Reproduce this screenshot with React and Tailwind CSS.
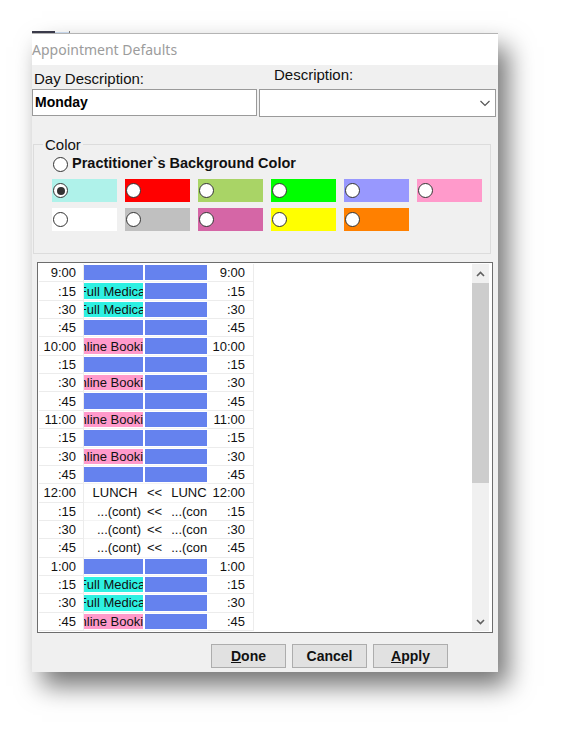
import React from 'react';

const swatches = [
  ['#aff2ea', true],
  ['#ff0000', false],
  ['#a9d466', false],
  ['#00ff00', false],
  ['#9898fe', false],
  ['#ff9acb', false],
  ['#ffffff', false],
  ['#c0c0c0', false],
  ['#d566a6', false],
  ['#ffff00', false],
  ['#ff8000', false],
];

// b = booked blue, t = full medical, p = online booking, l = lunch, c = lunch continued
const slots = [
  ['9:00', 'b', 'b'],
  [':15', 't', 'b'],
  [':30', 't', 'b'],
  [':45', 'b', 'b'],
  ['10:00', 'p', 'b'],
  [':15', 'b', 'b'],
  [':30', 'p', 'b'],
  [':45', 'b', 'b'],
  ['11:00', 'p', 'b'],
  [':15', 'b', 'b'],
  [':30', 'p', 'b'],
  [':45', 'b', 'b'],
  ['12:00', 'l', 'l'],
  [':15', 'c', 'c'],
  [':30', 'c', 'c'],
  [':45', 'c', 'c'],
  ['1:00', 'b', 'b'],
  [':15', 't', 'b'],
  [':30', 't', 'b'],
  [':45', 'p', 'b'],
];

function Radio({ checked }) {
  return (
    <span className="w-[15px] h-[15px] rounded-full border border-[#333] bg-white flex items-center justify-center shrink-0">
      {checked && <span className="w-[8px] h-[8px] rounded-full bg-[#333]" />}
    </span>
  );
}

function Cell({ kind, second }) {
  if (kind === 'b') return <div className="h-full bg-[#6582ee]" />;
  if (kind === 't' || kind === 'p') {
    return (
      <div
        className={`h-full flex items-center justify-center overflow-hidden whitespace-nowrap ${
          kind === 't' ? 'bg-[#2ef0e2]' : 'bg-[#ff9acb]'
        }`}
      >
        {kind === 't' ? 'Full Medical' : 'Online Booking'}
      </div>
    );
  }
  const text = kind === 'l' ? 'LUNCH' : '...(cont)';
  if (second) {
    return (
      <div className="h-full flex items-center overflow-hidden whitespace-nowrap bg-white">
        <span className="ml-[2px] mr-[9px]">&lt;&lt;</span>
        <span>{text}</span>
      </div>
    );
  }
  return (
    <div
      className={`h-full flex items-center overflow-hidden whitespace-nowrap bg-white ${
        kind === 'l' ? 'justify-center pl-[3px]' : 'justify-end pr-[2px]'
      }`}
    >
      {text}
    </div>
  );
}

export default function App() {
  return (
    <div className="w-[563px] h-[738px] bg-white pt-[31px] pl-[32px] font-['Liberation_Sans',Arial,sans-serif] text-black overflow-hidden">
      <div className="flex items-end h-[2px] w-[40px]">
        <div className="w-[23px] h-[2px] bg-[#3a3a4a]" />
        <div className="w-[14px] h-[1px] bg-[#c6d6ea]" />
        <div className="w-[1px] h-[2px] bg-[#777]" />
      </div>
      <div className="w-[466px] h-[639px] bg-[#f0f0f0] border-t border-[#b4b4b4] shadow-[10px_14px_24px_rgba(0,0,0,0.55)] flex flex-col">
        <div className="h-[31px] bg-white flex items-center font-['Noto_Sans',sans-serif] text-[14px] text-[#9c9c9c]">
          Appointment Defaults
        </div>

        <div className="flex h-[24px] text-[15px] text-[#111]">
          <div className="w-[242px] pl-[2px] pt-[3px]">Day Description:</div>
          <div className="-mt-px">Description:</div>
        </div>

        <div className="flex gap-[2px]">
          <div className="w-[225px] h-[27px] bg-white border border-[#9a9a9a] flex items-center pl-[2px] text-[14px] font-bold">
            Monday
          </div>
          <div className="w-[237px] h-[28px] bg-white border border-[#9a9a9a] flex items-center justify-end pr-[4px]">
            <svg width="12" height="8" viewBox="0 0 12 8" fill="none" stroke="#555" strokeWidth="1.2">
              <path d="M1.5 2 L6 6.5 L10.5 2" />
            </svg>
          </div>
        </div>

        <div className="relative mt-[27px] ml-[1px] w-[458px] h-[110px] border border-[#dcdcdc] pl-[18px] pt-[11px]">
          <span className="absolute -top-[11px] left-[9px] px-[2px] bg-[#f0f0f0] text-[15px] text-[#111]">Color</span>
          <div className="flex items-center gap-[4px] h-[16px] ml-[1px]">
            <Radio />
            <span className="text-[14.5px] font-bold text-[#111]">Practitioner`s Background Color</span>
          </div>
          <div className="grid grid-cols-[repeat(6,65px)] gap-x-[8px] gap-y-[6px] mt-[7px]">
            {swatches.map(([color, checked], i) => (
              <div key={i} className="h-[23px] flex items-center pl-[1px]" style={{ backgroundColor: color }}>
                <Radio checked={checked} />
              </div>
            ))}
          </div>
        </div>

        <div className="mt-[8px] ml-[5px] w-[456px] h-[371px] border border-[#6d6d6d] bg-white p-px flex text-[13px] leading-[15px] text-[#111]">
          <div className="flex-1 grid grid-rows-[repeat(20,minmax(0,1fr))]">
            {slots.map(([time, a, b], i) => (
              <div key={i} className="flex min-h-0 overflow-hidden">
                <div className="w-[45px] border-r border-b border-[#ececec] flex items-center justify-end pr-[7px]">{time}</div>
                <div className="w-[61px] py-px pr-[2px] border-b border-[#f4f4f4]">
                  <Cell kind={a} />
                </div>
                <div className="w-[63px] py-px pr-px border-b border-[#f4f4f4]">
                  <Cell kind={b} second />
                </div>
                <div className="w-[46px] border-r border-b border-[#ececec] flex items-center justify-end pr-[8px]">{time}</div>
              </div>
            ))}
          </div>
          <div className="w-[17px] mr-[2px] flex flex-col bg-[#f0f0f0]">
            <div className="h-[19px] flex items-center justify-center">
              <svg width="9" height="6" viewBox="0 0 9 6" fill="none" stroke="#606060" strokeWidth="1.6">
                <path d="M1 5 L4.5 1.5 L8 5" />
              </svg>
            </div>
            <div className="h-[200px] bg-[#cdcdcd]" />
            <div className="flex-1" />
            <div className="h-[19px] flex items-center justify-center">
              <svg width="9" height="6" viewBox="0 0 9 6" fill="none" stroke="#606060" strokeWidth="1.6">
                <path d="M1 1 L4.5 4.5 L8 1" />
              </svg>
            </div>
          </div>
        </div>

        <div className="flex gap-[6px] mt-[11px] ml-[179px] text-[14px] font-bold text-[#111]">
          <button className="w-[75px] h-[24px] bg-[#e1e1e1] border border-[#adadad]">
            <span className="underline">D</span>one
          </button>
          <button className="w-[75px] h-[24px] bg-[#e1e1e1] border border-[#adadad]">Cancel</button>
          <button className="w-[75px] h-[24px] bg-[#e1e1e1] border border-[#adadad]">
            <span className="underline">A</span>pply
          </button>
        </div>
      </div>
    </div>
  );
}
